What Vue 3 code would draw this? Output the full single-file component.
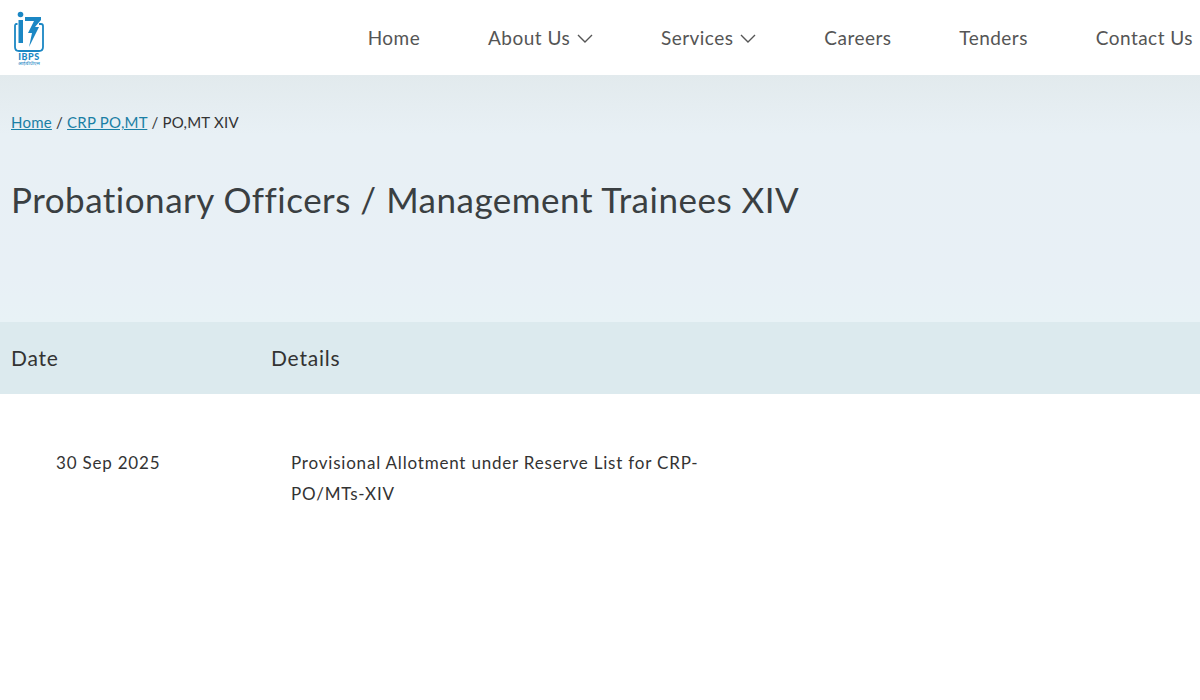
<script setup>
const nav = [
  { label: 'Home' },
  { label: 'About Us', caret: true },
  { label: 'Services', caret: true },
  { label: 'Careers' },
  { label: 'Tenders' },
  { label: 'Contact Us' }
]
</script>

<template>
  <div class="page">
    <header class="site-header">
      <div class="logo">
        <svg width="30" height="41" viewBox="0 0 30 41" fill="none">
          <circle cx="6.5" cy="3.5" r="2.8" fill="#1b87c4" />
          <path d="M4.5 9 H9 V32 H4.5 Z" fill="#1b87c4" />
          <path d="M3.5 13 H2.5 Q1 13 1 15 V36 Q1 40 5 40 H25 Q29 40 29 36 V15 Q29 13 27 13 H25" stroke="#1b87c4" stroke-width="1.8" />
          <path d="M11 6 H27 V9 L21 16 H25 L15 36 L18 22 H14 L20 10 H11 Z" fill="#1b87c4" />
        </svg>
        <span class="logo-name">IBPS</span>
        <span class="logo-sub">आईबीपीएस</span>
      </div>
      <nav class="main-nav">
        <a v-for="item in nav" :key="item.label" class="nav-link">
          {{ item.label }}
          <svg v-if="item.caret" class="caret" width="16" height="16" viewBox="0 0 16 16" fill="none" stroke="#555" stroke-width="1.4"><polyline points="1 5 8 12 15 5" /></svg>
        </a>
      </nav>
    </header>

    <section class="hero">
      <div class="breadcrumb">
        <a>Home</a> / <a>CRP PO,MT</a> / <span>PO,MT XIV</span>
      </div>
      <h1>Probationary Officers / Management Trainees XIV</h1>
    </section>

    <div class="table-head">
      <div class="col-date">Date</div>
      <div>Details</div>
    </div>
    <div class="table-row">
      <div class="row-date">30 Sep 2025</div>
      <div class="row-details">Provisional Allotment under Reserve List for CRP-PO/MTs-XIV</div>
    </div>
  </div>
</template>

<style scoped>
.page {
  font-family: Lato, "Open Sans", sans-serif;
  color: #333;
  background: #fff;
  height: 700px;
  overflow: hidden;
}

.site-header {
  height: 75px;
  display: flex;
  align-items: center;
  justify-content: space-between;
  background: #fff;
  padding-left: 14px;
  box-sizing: border-box;
}

.logo {
  display: flex;
  flex-direction: column;
  align-items: center;
  width: 30px;
  margin-top: 2px;
}

.logo-name {
  font-size: 9px;
  line-height: 9px;
  font-weight: 900;
  color: #1b87c4;
  letter-spacing: 0.5px;
}

.logo-sub {
  font-family: "Noto Sans", sans-serif;
  font-size: 5px;
  line-height: 5px;
  color: #1b87c4;
  white-space: nowrap;
}

.main-nav {
  display: flex;
  gap: 67.8px;
  margin-right: 7px;
}

.nav-link {
  display: flex;
  align-items: center;
  gap: 7px;
  font-size: 19px;
  color: #555;
  letter-spacing: 0.48px;
}

.hero {
  height: 247px;
  background: linear-gradient(#e2eaed, #e8f0f5 60px, #e8f0f6 200px, #e8f2f6);
  padding: 37px 11px 0;
  box-sizing: border-box;
}

.breadcrumb {
  font-size: 15px;
  line-height: 20px;
  color: #333;
  letter-spacing: 0.23px;
}

.breadcrumb a {
  color: #1a7fa5;
  text-decoration: underline;
}

h1 {
  margin: 45px 0 0;
  font-size: 35px;
  line-height: 44px;
  font-weight: 400;
  color: #3a3f42;
  letter-spacing: 0.5px;
}

.table-head {
  height: 72px;
  display: flex;
  align-items: center;
  background: #dceaee;
  padding: 0 0 2px 11px;
  box-sizing: border-box;
  font-size: 21px;
  font-weight: 400;
  color: #333;
  letter-spacing: 0.8px;
}

.col-date {
  width: 260px;
}

.table-row {
  display: flex;
  padding: 53px 0 0 56px;
  font-size: 17px;
  line-height: 31px;
  color: #333;
  letter-spacing: 0.8px;
}

.row-date {
  width: 235px;
}

.row-details {
  width: 420px;
}
</style>
